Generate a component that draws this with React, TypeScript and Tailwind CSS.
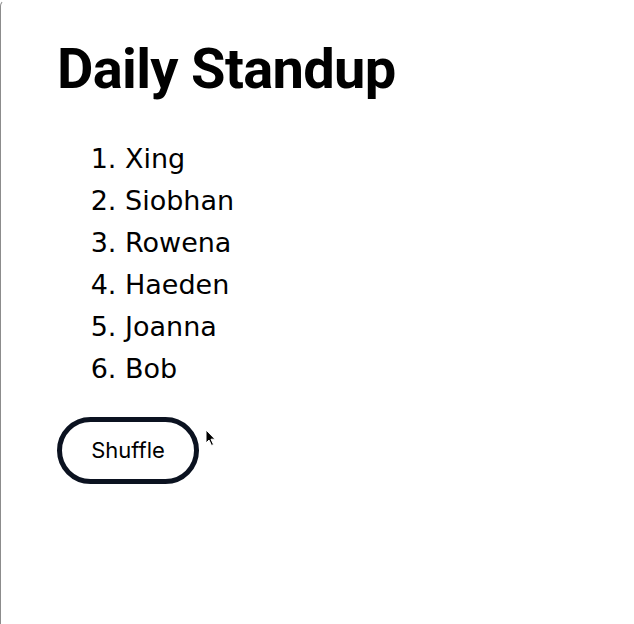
import React from "react";

const people = ["Xing", "Siobhan", "Rowena", "Haeden", "Joanna", "Bob"];

// mouse pointer that was caught in the screenshot
function Cursor() {
  return (
    <svg
      className="absolute left-[204px] top-[428px]"
      width="12"
      height="18"
      viewBox="0 0 12 18"
      aria-hidden="true"
    >
      <path
        d="M1 1 L1 14 L4 11 L6.5 16.5 L8.5 15.5 L6 10.2 L10 10.2 Z"
        fill="#000"
        stroke="#fff"
        strokeWidth="1"
        strokeLinejoin="round"
      />
    </svg>
  );
}

export default function App() {
  return (
    <div className="relative min-h-[624px] w-[634px] overflow-hidden rounded-tl-[6px] border-l border-t border-l-[#8c8c8c] border-t-transparent bg-white">
      <main className="px-[56px] pt-[40px]">
        <h1 className="font-['Roboto',sans-serif] text-[56px] font-bold leading-[56px] tracking-[-0.012em] text-black">
          Daily Standup
        </h1>
        <ol className="mt-[41px] list-decimal pl-[68px] font-['DejaVu_Sans',sans-serif] text-[27px] leading-[42px] text-black">
          {people.map((p) => (
            <li key={p}>{p}</li>
          ))}
        </ol>
        <button
          type="button"
          className="mt-[27px] h-[67px] w-[142px] rounded-full border-[5px] border-[#0b1220] bg-white font-['Inter',sans-serif] text-[22px] text-black"
        >
          Shuffle
        </button>
      </main>
      <Cursor />
    </div>
  );
}
